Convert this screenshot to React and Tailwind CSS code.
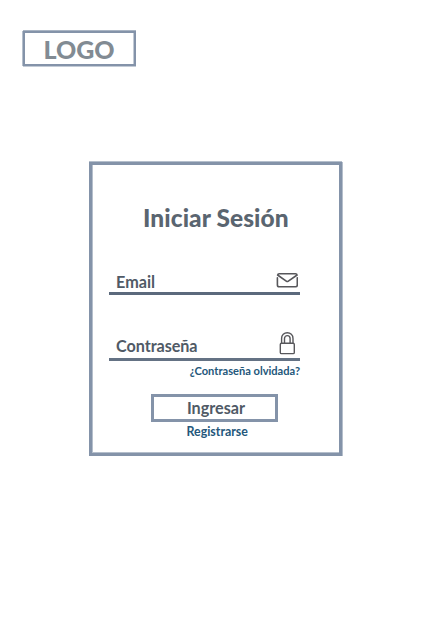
function MailIcon() {
  return (
    <svg className="mt-[1px] h-4 w-[22px]" viewBox="0 0 22 16" fill="none" stroke="#57575b" strokeWidth="1.6" strokeLinecap="round" strokeLinejoin="round">
      <path d="M1.4 5.8V13Q1.4 14.8 3.2 14.8H19.5Q21.3 14.8 21.3 13V5.8" />
      <path d="M1.6 3Q1.8 1.7 3.2 1.7H19.5Q20.9 1.7 21.1 3L12 9.3Q11.3 9.8 10.6 9.3Z" />
    </svg>
  );
}

function LockIcon() {
  return (
    <svg className="h-[24px] w-4" viewBox="0 0 16 24" fill="none" stroke="#57575b" strokeWidth="1.4" strokeLinejoin="round">
      <rect x="1.3" y="12.3" width="14" height="10.3" rx="1.2" />
      <path d="M2.6 12V7.4a5.7 5.7 0 0 1 11.4 0V12M5.5 12V7.4a2.8 2.8 0 0 1 5.6 0V12" />
    </svg>
  );
}

export default function App() {
  return (
    <div className="flex h-[629px] w-[428px] flex-col bg-white pt-[31px] font-['Lato',sans-serif]">
      <header className="ml-[23px] flex h-[35px] w-[113px] items-center justify-center border-2 border-[#8493a9] pt-[2px] text-[25px] leading-none font-black text-[#828b93] shadow-[0_-1px_#a9b4c3,-1px_0_#b5bfcc,0_1px_#c3cbd6,inset_-1px_0_#c3cbd6]">
        <span className="-ml-px">LOGO</span>
      </header>
      <main className="mt-24 ml-[89px] flex h-[294px] w-[253px] flex-col border-3 border-[#8493a9] pl-[17px] shadow-[0_-1px_#b5bfcc,1px_0_#b5bfcc,inset_1px_0_#b5bfcc,inset_0_-1px_#b5bfcc]">
        <h1 className="mt-[38px] ml-[34px] h-[30px] text-[24.5px] leading-[30px] font-black tracking-[0.07px] whitespace-nowrap text-[#5a6570]">Iniciar Sesión</h1>
        <div className="mt-[38px] flex h-[24px] w-[191px] justify-between border-b-3 border-[#5b697c] pr-[2px] pl-[7px]">
          <label className="mt-[1px] text-[16.2px] leading-5 font-bold text-[#505a66]">Email</label>
          <MailIcon />
        </div>
        <div className="mt-[36px] flex h-[30px] w-[191px] justify-between border-b-3 border-[#647284] pr-[5px] pl-[7px]">
          <label className="mt-[5px] text-[16.2px] leading-5 font-bold tracking-[-0.06px] text-[#505a66]">Contraseña</label>
          <LockIcon />
        </div>
        <a className="mt-[2px] h-4 w-[191px] text-right text-[11.1px] leading-4 font-bold whitespace-nowrap text-[#24577b]">¿Contraseña olvidada?</a>
        <button className="mt-[15px] ml-[42px] flex h-[28px] w-[127px] items-center justify-center border-3 border-[#8493a9] pl-[3px] text-[16.2px] leading-5 font-bold text-[#505a66]">Ingresar</button>
        <a className="mt-[2px] ml-[77.5px] text-[12.4px] leading-4 font-bold text-[#24577b]">Registrarse</a>
      </main>
    </div>
  );
}
